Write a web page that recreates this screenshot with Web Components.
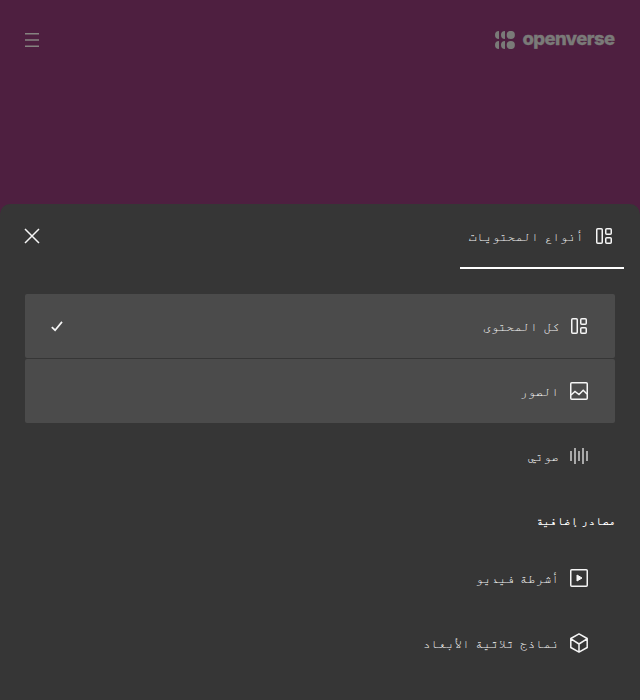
<!DOCTYPE html>
<html lang="ar" dir="rtl"><head><meta charset="utf-8"><title>Openverse</title>
<style>
html,body{margin:0;height:100%;overflow:hidden}
body{background:#4e1f40;font:13px/20px FreeMono,"DejaVu Sans Mono",monospace;word-spacing:-2.2px;color:#f5f5f5}
</style></head><body>
<ov-page></ov-page>
<script>
const define=(name,html)=>customElements.define(name,class extends HTMLElement{
  constructor(){super();this.attachShadow({mode:'open'}).innerHTML=html}
});
const icons={
  all:'<rect x="1.75" y="1.75" width="5.5" height="14.5" rx="1"/><rect x="10.75" y="1.75" width="5.5" height="5.5" rx="1"/><rect x="10.75" y="10.75" width="5.5" height="5.5" rx="1"/>',
  image:'<rect x=".75" y=".75" width="16.5" height="16.5" rx="1"/><path d="M1 13 L5 9.5 L9 12.5 L13.2 8.2 L17 12"/>',
  audio:'<path d="M1 4V14M5 1V17M9 4V14M13 1V17M17 4V14"/>',
  video:'<rect x=".75" y=".75" width="16.5" height="16.5" rx="1"/><path d="M7 6 L12 9 L7 12Z" fill="currentColor" stroke-width="1"/>',
  model:'<path d="M9 -.1 L17.2 4.5V13.5L9 18.1L.8 13.5V4.5ZM1 4.8L9 10L17 4.8M9 10V18" stroke-linejoin="round"/>',
  close:'<path d="M2 2L16 16M16 2L2 16"/>',
  check:'<path d="M3.8 10.1L7.1 13.2L14 4.9" stroke-width="1.7"/>',
  menu:'<path d="M2 2.75H16M2 9H16M2 15.25H16"/>'
};
customElements.define('ov-icon',class extends HTMLElement{
  connectedCallback(){
    this.attachShadow({mode:'open'}).innerHTML=`<style>:host{display:block;width:18px;height:18px;flex:none}svg{display:block;overflow:visible}</style><svg width="18" height="18" viewBox="0 0 18 18" fill="none" stroke="currentColor" stroke-width="1.5">${icons[this.getAttribute('name')]}</svg>`;
  }
});
define('ov-logo',`<style>:host{display:flex;direction:ltr;align-items:center;gap:7px;color:#7a7a78;font:800 18.5px/24px Inter,sans-serif;letter-spacing:-.6px}svg{display:block}span{display:block;height:24px;margin-top:-4px;-webkit-text-stroke:.3px currentColor}</style>
<svg width="20" height="18" viewBox="0 0 20 18" fill="currentColor"><path d="M4 0a4 4 0 0 0 0 8ZM10 0a4 4 0 0 0 0 8ZM4 10a4 4 0 0 0 0 8ZM10 10a4 4 0 0 0 0 8Z"/><circle cx="15.8" cy="4" r="4.1"/><circle cx="15.8" cy="14" r="4.1"/></svg><span>openverse</span>`);
define('ov-header',`<style>:host{display:flex;justify-content:space-between;align-items:center;height:80px;padding:0 25.5px 0 23px;box-sizing:border-box}ov-icon{color:#858380}</style><ov-logo></ov-logo><ov-icon name="menu"></ov-icon>`);
define('ov-tab',`<style>:host{display:flex;box-sizing:border-box;width:164px;height:65px;padding:0 11px;gap:11.5px;align-items:center;border-bottom:2px solid #fff}span{display:block;white-space:nowrap;margin-top:5px}</style><slot name="icon"></slot><span><slot></slot></span>`);
customElements.define('ov-item',class extends HTMLElement{
  connectedCallback(){
    this.attachShadow({mode:'open'}).innerHTML=`<style>:host{display:flex;height:64px;padding:0 27px 0 23px;box-sizing:border-box;align-items:center;gap:11px;border-radius:2px;margin-bottom:1px}:host([filled]){background:#4b4b4b}ov-icon[name=audio]{color:#d0d0d0}span{flex:1;white-space:nowrap;margin-top:4px}</style><ov-icon name="${this.getAttribute('icon')}"></ov-icon><span><slot></slot></span>${this.hasAttribute('checked')?'<ov-icon name="check"></ov-icon>':''}`;
  }
});
define('ov-sheet',`<style>:host{display:block;flex:1;background:#363636;border-radius:10px 10px 0 0}
.bar{display:flex;justify-content:space-between;height:65px;padding:0 16px 0 23px}
.close{display:flex;align-items:center;height:64px}
.list{padding:25px 25px 0}
h2{margin:0 -1px 0 0;height:57px;font:bold 11.5px/20px FreeMono,"DejaVu Sans Mono",monospace;word-spacing:-3px;color:#fff;padding-top:23px;box-sizing:border-box}</style>
<div class="bar"><ov-tab><ov-icon name="all" slot="icon"></ov-icon>أنواع المحتويات</ov-tab><div class="close"><ov-icon name="close"></ov-icon></div></div>
<div class="list"><ov-item icon="all" filled checked>كل المحتوى</ov-item><ov-item icon="image" filled>الصور</ov-item><ov-item icon="audio">صوتي</ov-item><h2>مصادر إضافية</h2><ov-item icon="video">أشرطة فيديو</ov-item><ov-item icon="model">نماذج ثلاثية الأبعاد</ov-item></div>`);
define('ov-page',`<style>:host{display:flex;flex-direction:column;height:100vh}ov-header{margin-bottom:124px}</style><ov-header></ov-header><ov-sheet></ov-sheet>`);
</script></body></html>
